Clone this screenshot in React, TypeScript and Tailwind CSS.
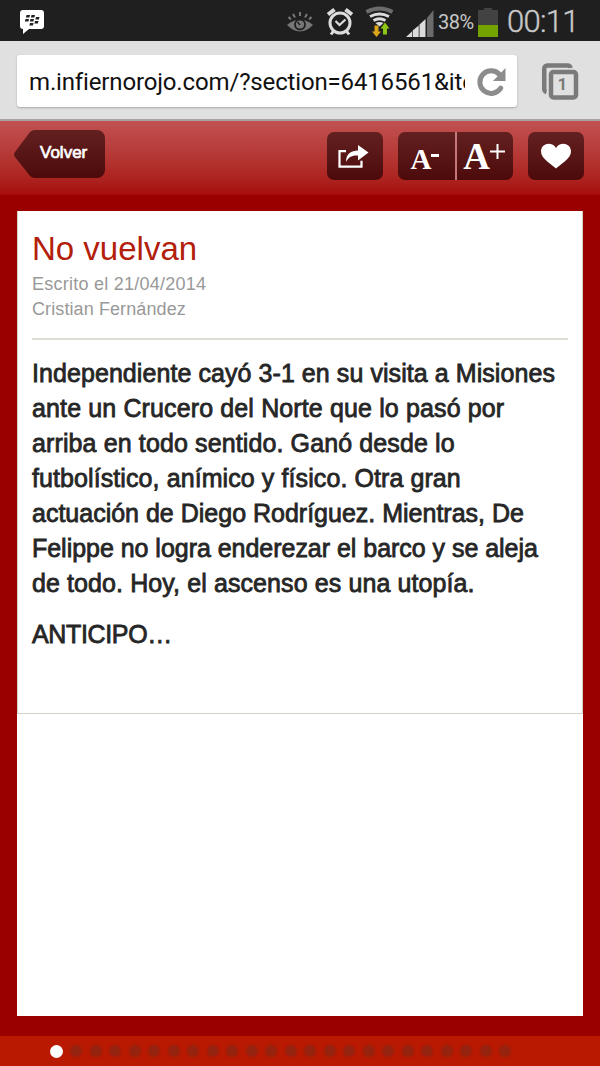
const lead = [
  { text: 'Independiente cayó 3-1 en su visita a Misiones', tracking: 'tracking-[0.07px]' },
  { text: 'ante un Crucero del Norte que lo pasó por', tracking: 'tracking-[0.13px]' },
  { text: 'arriba en todo sentido. Ganó desde lo', tracking: 'tracking-[0.12px]' },
  { text: 'futbolístico, anímico y físico. Otra gran', tracking: 'tracking-[0.09px]' },
  { text: 'actuación de Diego Rodríguez. Mientras, De', tracking: 'tracking-[0px]' },
  { text: 'Felippe no logra enderezar el barco y se aleja', tracking: 'tracking-[-0.03px]' },
  { text: 'de todo. Hoy, el ascenso es una utopía.', tracking: 'tracking-[0.1px]' },
]

const dots = Array.from({ length: 24 }, (_, i) => i)

function StatusBar() {
  return (
    <div className="flex h-[41px] items-center bg-[#1f1f1f] font-['Roboto',sans-serif] text-[#c8c8c8]">
      <svg className="ml-[19px] h-[26px] w-[26px]" viewBox="0 0 26 26">
        <path d="M4 2h18a3 3 0 0 1 3 3v13a3 3 0 0 1-3 3H10l-6 5v-5H4a3 3 0 0 1-3-3V5a3 3 0 0 1 3-3z" fill="#fff" />
        <path
          d="M7.500 7h3.500l-.6 2.400H6.900zM12.500 7H16l-.6 2.400h-3.500zM6.500 11h3.500l-.6 2.400H5.900zM11.500 11H15l-.6 2.400h-3.500zM17 9h3.500l-.6 2.400h-3.500zM16 13h3.500l-.6 2.400h-3.500zM11 15h3.500l-.6 2.400h-3.500z"
          fill="#1f1f1f"
        />
      </svg>

      <div className="ml-auto flex items-center">
        <svg className="h-[41px] w-[28px]" viewBox="286 0 28 41">
          <path d="M287 25q13-11 26 0q-13 13-26 0z" fill="#777" />
          <circle cx="300" cy="24.500" r="5" fill="#777" stroke="#1f1f1f" strokeWidth="1.800" />
          <path d="M300 25l-2.500-3" stroke="#1f1f1f" strokeWidth="1.500" />
          <path d="M300 12v4M293 14l2 3.500M307 14l-2 3.500M288.500 17l2.500 2.500M311.500 17l-2.500 2.500" stroke="#777" strokeWidth="2" />
        </svg>
        <svg className="ml-[12px] h-[41px] w-[29px]" viewBox="326 0 29 41" fill="none" stroke="#dcdcdc">
          <circle cx="340" cy="23" r="10" strokeWidth="3" />
          <path d="M335.500 21l4 4 6-5.500" strokeWidth="2.200" />
          <path d="M328 14.500l6.500-5M352 14.500l-6.500-5" strokeWidth="4" />
          <path d="M333.500 31l-2.500 3.500M346.500 31l2.500 3.500" strokeWidth="3" />
        </svg>
        <svg className="ml-[10px] h-[41px] w-[30px]" viewBox="365 0 30 41" fill="none">
          <path d="M366.500 12q13-7 26 0" stroke="#6b6b6b" strokeWidth="4" />
          <path d="M370 16.500q9.500-5 19 0M373.500 20.500q6-3.500 12 0" stroke="#dcdcdc" strokeWidth="2.800" />
          <path d="M375.500 23q4-2 8 0l-4 3.500z" fill="#dcdcdc" />
          <path d="M374.500 25.500h4v6h2.500l-4.500 5.500-4.500-5.500h2.500z" fill="#dba51c" />
          <path d="M383 34.500h4v-6h2.500l-4.500-6-4.500 6h2.500z" fill="#8cc514" />
        </svg>
        <svg className="ml-[11px] h-[41px] w-[28px]" viewBox="406 0 28 41">
          <path d="M406 37l6-5.500V37zM412.700 30.500l6-5V37h-6zM419.500 24.500l6-5.500v18h-6z" fill="#dcdcdc" />
          <path d="M427 18l6.500-8v27H427z" fill="#6b6b6b" />
        </svg>
        <span className="ml-[4px] w-[40px] whitespace-nowrap pt-[3px] text-[20px] leading-[38px] tracking-[-0.5px]">38%</span>
        <svg className="h-[41px] w-[20px]" viewBox="478 0 20 41">
          <path d="M478 10h6V8h8v2h6v27h-20z" fill="#424242" />
          <path d="M478 25h20v12h-20z" fill="#74a300" />
        </svg>
        <span className="ml-[9px] w-[93px] whitespace-nowrap pt-[2px] text-[31px] font-light leading-[39px] tracking-[-0.7px] [-webkit-text-stroke:0.4px_#c8c8c8]">
          00:11
        </span>
      </div>
    </div>
  )
}

function AddressBar() {
  return (
    <div className="flex h-[80px] items-start border-b-2 border-[#aaa2a0] bg-[#e0e0e0] pl-[17px] pt-[14px] font-['Roboto',sans-serif]">
      <div className="flex h-[52px] w-[500px] items-center rounded-[3px] bg-white pl-[12px] shadow-[0_1px_2px_rgba(0,0,0,0.25)]">
        <span className="w-[436px] overflow-hidden whitespace-nowrap pt-[2px] text-[24px] leading-[36px] tracking-[-0.15px] text-[#111]">
          m.infiernorojo.com/?section=6416561&amp;item=1
        </span>
        <svg className="ml-[11px] h-[32px] w-[32px]" viewBox="476 65 32 32">
          <path d="M500.700 88.200A11.300 11.300 0 1 1 499.500 74.500" fill="none" stroke="#8c8c8c" strokeWidth="5" strokeLinecap="round" />
          <path d="M505.500 68v13H493z" fill="#8c8c8c" />
        </svg>
      </div>
      <div className="relative ml-[24px] mt-[7px] h-[38px] w-[38px]">
        <svg className="absolute inset-0" viewBox="541 62 38 38" fill="none" stroke="#7a7a7a" strokeWidth="4.500">
          <path d="M546.500 92a3 3 0 0 1-2.250-2.500V68.500a3 3 0 0 1 3-3H568a3 3 0 0 1 2.500 2.500" />
          <rect x="551" y="72" width="25" height="25.500" rx="2.500" />
        </svg>
        <span className="absolute left-[9px] top-[10px] w-[25px] text-center text-[17px] font-bold leading-[25px] text-[#7a7a7a]">1</span>
      </div>
    </div>
  )
}

function Toolbar() {
  const button = 'flex h-[48px] items-center justify-center bg-linear-to-b from-[#632020] to-[#4c0a0a]'
  return (
    <header className="flex h-[74px] items-start bg-linear-to-b from-[#c15151] to-[#a60b0b] pl-[14px] pr-[16px] pt-[9px]">
      <div className="relative h-[49px] w-[91px]">
        <svg className="absolute inset-0" viewBox="0 0 91 49">
          <defs>
            <linearGradient id="back" x2="0" y2="1">
              <stop stopColor="#632020" />
              <stop offset="1" stopColor="#4c0a0a" />
            </linearGradient>
          </defs>
          <path d="M21 0h62a8 8 0 0 1 8 8v32a8 8 0 0 1-8 8H21q-3 0-5-2L1 27q-2-2.500 0-5L16 2q2-2 5-2z" fill="url(#back)" />
        </svg>
        <span className="absolute left-[26px] top-[11px] text-[17px] leading-[24px] text-white [-webkit-text-stroke:0.7px_white]">
          Volver
        </span>
      </div>

      <div className={`${button} ml-auto mt-[2px] w-[56px] rounded-[7px]`}>
        <svg className="mr-[3px] h-[24px] w-[31px]" viewBox="338 144 31 24">
          <path d="M346 151.200h-6.500v15.500h22v-6" fill="none" stroke="#fff" strokeWidth="2.200" />
          <path d="M346 162c0-8 5-11.500 12-11.500V145l10.500 7.500-10.500 8v-5c-6-.5-9.500 1.500-12 6.500z" fill="#fff" />
        </svg>
      </div>
      <div className="ml-[15px] mt-[2px] flex font-['Liberation_Serif',serif] text-white">
        <div className={`${button} w-[57px] rounded-l-[7px] pr-[3px]`}>
          <span className="relative top-[3px] text-[29px] font-bold leading-none">A</span>
          <span className="mb-[1px] h-[3px] w-[8px] bg-white" />
        </div>
        <div className="h-[48px] w-[2px] bg-[#c47878]" />
        <div className={`${button} w-[56px] rounded-r-[7px] pr-[2px]`}>
          <span className="relative text-[37px] font-bold leading-none">A</span>
          <svg className="mb-[9px] h-[15px] w-[15px]" viewBox="0 0 15 15">
            <path d="M7.500 0v15M0 7.500h15" stroke="#fff" strokeWidth="2" />
          </svg>
        </div>
      </div>
      <div className={`${button} ml-[15px] mt-[2px] w-[56px] rounded-[7px]`}>
        <svg className="h-[26px] w-[30px]" viewBox="0 0 30 26">
          <path d="M15 25.500C11 21.500 0 16 0 8.500C0 0 11-2 15 5C19-2 30 0 30 8.500C30 16 19 21.500 15 25.500z" fill="#fff" />
        </svg>
      </div>
    </header>
  )
}

function Article() {
  return (
    <article className="h-[503px] border border-t-0 border-[#d3cfc9] px-[14px] pt-[20px]">
      <h1 className="whitespace-nowrap text-[33px] leading-[36px] text-[#b3200a]">No vuelvan</h1>
      <div className="mt-[5px] whitespace-nowrap text-[18px] leading-[25px] text-[#999]">
        <p className="tracking-[0.25px]">Escrito el 21/04/2014</p>
        <p className="tracking-[0.1px]">Cristian Fernández</p>
      </div>
      <hr className="mt-[16px] border-t-2 border-[#ddddd3]" />
      <div className="pt-[16px] text-[25px] leading-[35px] text-[#262626] [-webkit-text-stroke:0.8px_#262626]">
        <p>
          {lead.map((line) => (
            <span key={line.text} className={`block whitespace-nowrap ${line.tracking}`}>
              {line.text}
            </span>
          ))}
        </p>
        <p className="mt-[16px] tracking-[-0.35px]">ANTICIPO…</p>
      </div>
    </article>
  )
}

export default function App() {
  return (
    <div className="flex h-[1066px] w-[600px] flex-col overflow-hidden bg-[#9b0000] font-['Liberation_Sans',sans-serif]">
      <StatusBar />
      <AddressBar />
      <Toolbar />
      <main className="ml-[17px] mt-[16px] h-[805px] w-[566px] bg-white">
        <Article />
      </main>
      <footer className="mt-auto flex h-[30px] items-center gap-[7.500px] bg-[#b81900] pl-[50px]">
        {dots.map((i) => (
          <span
            key={i}
            className={i === 0 ? 'mr-[-0.5px] h-[13px] w-[13px] rounded-full bg-white' : 'h-[12px] w-[12px] rounded-full bg-[#94230f] blur-[1px]'}
          />
        ))}
      </footer>
    </div>
  )
}
